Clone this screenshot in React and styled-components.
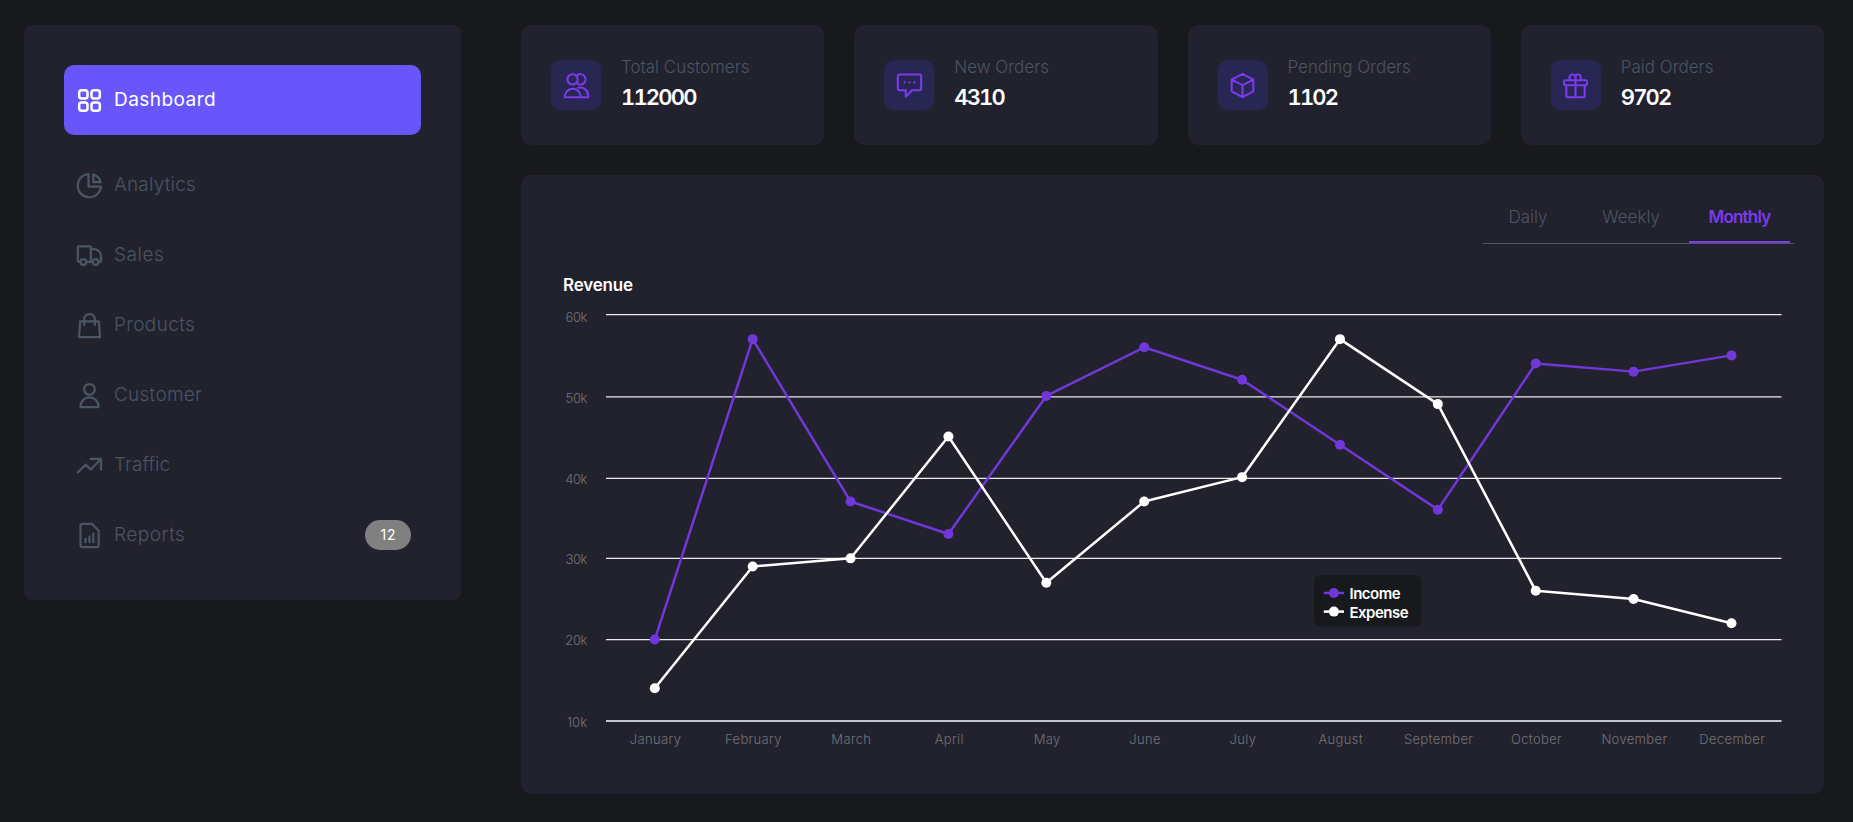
import React from 'react';
import styled, { createGlobalStyle, css } from 'styled-components';

const GlobalStyle = createGlobalStyle`
  *, *::before, *::after { box-sizing: border-box; }
  body {
    margin: 0;
    background: #17191c;
    color: #fff;
    font-family: Inter, 'Liberation Sans', sans-serif;
    font-weight: 300;
  }
`;

const Page = styled.div`
  display: flex;
  align-items: flex-start;
  gap: 60px;
  min-height: 822px;
  padding: 25px 29px 28px 24px;
`;

const Sidebar = styled.nav`
  display: flex;
  flex-direction: column;
  flex: none;
  width: 437px;
  padding: 40px 40px 30px;
  border-radius: 8px;
  background: #22212e;
`;

const NavItem = styled.a`
  display: flex;
  align-items: center;
  height: 70px;
  padding: 0 10px 0 12.5px;
  border-radius: 10px;
  color: #4b5563;
  ${(p) =>
    p.$active &&
    css`
      margin-bottom: 15px;
      background: #6956fb;
      color: #fff;
      font-weight: 400;
    `}
`;

const NavLabel = styled.span`
  margin-left: 12.5px;
  font-size: 19px;
  line-height: 24px;
  letter-spacing: ${(p) => p.$track}px;
`;

const Badge = styled.span`
  margin-left: auto;
  width: 46px;
  height: 30px;
  border-radius: 15px;
  background: #808080;
  color: #fff;
  font-size: 14px;
  font-weight: 400;
  line-height: 29px;
  letter-spacing: 1px;
  text-indent: 1px;
  text-align: center;
`;

const Icon = styled.svg`
  display: block;
  flex: none;
  width: 25px;
  height: 25px;
  overflow: visible;
  fill: none;
  stroke: currentColor;
  stroke-width: ${(p) => p.$weight || 1.25};
  stroke-linecap: round;
  stroke-linejoin: round;
`;

const Main = styled.main`
  display: flex;
  flex: 1;
  flex-direction: column;
  gap: 30px;
  min-width: 0;
`;

const Stats = styled.section`
  display: grid;
  grid-template-columns: repeat(4, 1fr);
  gap: 30px;
`;

const StatCard = styled.article`
  display: flex;
  align-items: center;
  gap: 20px;
  height: 120px;
  padding: 0 30px;
  border-radius: 10px;
  background: #22212e;
`;

const StatIcon = styled.div`
  display: flex;
  align-items: center;
  justify-content: center;
  width: 50px;
  height: 50px;
  border-radius: 10px;
  background: #282653;
  color: #7c3aed;
`;

const StatText = styled.div`
  margin-bottom: 6px;
  line-height: 30px;
`;

const StatLabel = styled.div`
  color: #4b5563;
  font-size: 17px;
`;

const StatValue = styled.div`
  font-size: 22px;
  font-weight: 600;
  font-variant-numeric: tabular-nums;
  letter-spacing: -1.8px;
`;

const ChartCard = styled.section`
  display: flex;
  flex-direction: column;
  padding: 30px;
  border-radius: 10px;
  background: #22212e;
`;

const Tabs = styled.div`
  display: flex;
  align-self: flex-end;
  height: 39px;
  padding-right: 4px;
  border-bottom: 1px solid #4b5563;
`;

const Tab = styled.button`
  width: ${(p) => p.$width}px;
  height: 38px;
  padding: 0 0 14px;
  border: 0;
  background: none;
  color: #4b5563;
  font: 300 17px/24px Inter, 'Liberation Sans', sans-serif;
  ${(p) =>
    p.$active &&
    css`
      padding: 0 0 13px;
      border-bottom: 2px solid #7c3aed;
      color: #7c3aed;
      font-weight: 600;
      letter-spacing: -0.8px;
    `}
`;

const ChartTitle = styled.h2`
  margin: 31px 0 5px 12px;
  font-size: 17px;
  font-weight: 600;
  line-height: 20px;
  letter-spacing: -0.2px;
`;

const Chart = styled.svg`
  display: block;
  width: 1243px;
  height: 464px;
`;

const AxisText = styled.text`
  fill: #737375;
  font-size: 13px;
  letter-spacing: ${(p) => p.$track}px;
`;

const LegendText = styled.text`
  fill: #fff;
  font-size: 15px;
  font-weight: 600;
  letter-spacing: -0.5px;
`;

const icons = {
  grid: (
    <>
      <rect x="1.3" y="1.3" width="5" height="5" rx="1.5" />
      <rect x="8.7" y="1.3" width="5" height="5" rx="1.5" />
      <rect x="1.3" y="8.7" width="5" height="5" rx="1.5" />
      <rect x="8.7" y="8.7" width="5" height="5" rx="1.5" />
    </>
  ),
  pie: (
    <>
      <path d="M6.9.6A7 7 0 1 0 14.4 8.1H6.9z" />
      <path d="M9.8.9v4.6h4.4A6.6 6.6 0 0 0 9.8.9z" />
    </>
  ),
  truck: (
    <>
      <path d="M2 11.2H1.1a.6.6 0 0 1-.6-.6V2.6a.6.6 0 0 1 .6-.6h6.6a.6.6 0 0 1 .6.6v8.6M5.5 11.3h3.8M8.3 3.7h1.8a4.3 4.3 0 0 1 4.3 4.3v2.7a.6.6 0 0 1-.6.6H13" />
      <circle cx="3.8" cy="11.4" r="1.7" />
      <circle cx="11.2" cy="11.4" r="1.7" />
    </>
  ),
  bag: (
    <path d="M1.9 5h11.2l.7 9.5H1.2zM4.3 7.2V3.8a3.2 3.2 0 0 1 6.4 0v3.4" />
  ),
  user: (
    <>
      <circle cx="7.5" cy="3.8" r="3.2" />
      <path d="M2.1 14.4v-.4a5.4 5.4 0 0 1 10.8 0v.4z" />
    </>
  ),
  trend: <path d="M.5 11.6 5.2 6.9l3 3 6-6M8 3.5h6.4v6.4" />,
  report: (
    <path d="M3.2.5h5.7l4.1 4.2v9a.8.8 0 0 1-.8.8H2.9a.8.8 0 0 1-.8-.8v-12A1.1 1.1 0 0 1 3.2.5zM5.1 9.5v2M7.5 8v3.5M9.8 6.4v5.1" />
  ),
  users: (
    <>
      <circle cx="5.1" cy="3.8" r="3.1" />
      <path d="M.5 14.5v-.9a4.8 4.8 0 0 1 9.5 0v.9zM8 1.3a3.1 3.1 0 1 1 0 5M8.4 8.9a4.8 4.8 0 0 1 6.1 4.7v.9H10" />
    </>
  ),
  chat: (
    <>
      <path d="M1.5.9h12a1 1 0 0 1 1 1v7.4a1 1 0 0 1-1 1H9l-3.7 3.9v-3.9H1.5a1 1 0 0 1-1-1V1.9a1 1 0 0 1 1-1z" />
      <path d="M4.6 5.6h.01M7.5 5.6h.01M10.4 5.6h.01" strokeWidth="1.4" />
    </>
  ),
  cube: (
    <path d="M7.5.5 14 4v7L7.5 14.5 1 11V4zM1 4l6.5 3.3L14 4M7.5 7.3v7.2" />
  ),
  gift: (
    <>
      <rect x=".6" y="4.3" width="13.8" height="3" rx=".8" />
      <path d="M2 7.3v6.3a.9.9 0 0 0 .9.9h9.2a.9.9 0 0 0 .9-.9V7.3M7.5 4.3v10.2M7.5 4.3V2.4A1.85 1.85 0 1 0 4.1 3.7l.2.5M7.5 4.3V2.9a1.6 1.6 0 1 1 3.1 0v1.3" />
    </>
  ),
};

const Glyph = ({ name, weight }) => (
  <Icon viewBox="0 0 15 15" $weight={weight} aria-hidden="true">
    {icons[name]}
  </Icon>
);

const navItems = [
  { label: 'Dashboard', icon: 'grid', track: 0.45, active: true },
  { label: 'Analytics', icon: 'pie', track: 0.19 },
  { label: 'Sales', icon: 'truck', track: 0.5 },
  { label: 'Products', icon: 'bag', track: 0.38 },
  { label: 'Customer', icon: 'user', track: 0.26 },
  { label: 'Traffic', icon: 'trend', track: 0.05 },
  { label: 'Reports', icon: 'report', track: 0.5, badge: '12' },
];

const stats = [
  { label: 'Total Customers', value: '112000', icon: 'users' },
  { label: 'New Orders', value: '4310', icon: 'chat' },
  { label: 'Pending Orders', value: '1102', icon: 'cube' },
  { label: 'Paid Orders', value: '9702', icon: 'gift' },
];

const tabs = [
  { label: 'Daily', width: 90 },
  { label: 'Weekly', width: 116 },
  { label: 'Monthly', width: 101, active: true },
];

const gridLines = [
  { label: '60k', y: 314.65, text: 322 },
  { label: '50k', y: 396.95, text: 403 },
  { label: '40k', y: 478.35, text: 484 },
  { label: '30k', y: 558.35, text: 564 },
  { label: '20k', y: 639.65, text: 645 },
  { label: '10k', y: 721, text: 727, base: true },
];

const months = [
  'January', 'February', 'March', 'April', 'May', 'June',
  'July', 'August', 'September', 'October', 'November', 'December',
];

const series = [
  { name: 'Income', color: '#7038d8', values: [20, 57, 37, 33, 50, 56, 52, 44, 36, 54, 53, 55] },
  { name: 'Expense', color: '#fff', values: [14, 29, 30, 45, 27, 37, 40, 57, 49, 26, 25, 22] },
];

const xAt = (i) => 654.8 + i * 97.88;
const yAt = (v) => 720.7 - (v - 10) * 8.118;

function RevenueChart() {
  return (
    <Chart viewBox="551 300 1243 464">
      {gridLines.map((g) => (
        <g key={g.label}>
          <line
            x1="606"
            x2="1781.5"
            y1={g.y}
            y2={g.y}
            stroke={g.base ? '#c3c8d6' : '#ededed'}
            strokeWidth={g.base ? 2 : 1.3}
          />
          <AxisText x="587" y={g.text} textAnchor="end" $track={g.base ? 0 : -0.4}>
            {g.label}
          </AxisText>
        </g>
      ))}
      {months.map((m, i) => (
        <AxisText key={m} x={xAt(i) + 0.8} y="744" textAnchor="middle" $track={0.35}>
          {m}
        </AxisText>
      ))}
      {series.map((s) => (
        <g key={s.name} fill={s.color}>
          <polyline
            points={s.values.map((v, i) => `${xAt(i)},${yAt(v)}`).join(' ')}
            fill="none"
            stroke={s.color}
            strokeWidth="2.5"
            strokeLinejoin="bevel"
          />
          {s.values.map((v, i) => (
            <circle key={i} cx={xAt(i)} cy={yAt(v)} r="5" />
          ))}
        </g>
      ))}
      <rect x="1314" y="575" width="107.3" height="51.3" rx="6" fill="#17191c" />
      {series.map((s, i) => (
        <g key={s.name}>
          <line
            x1="1323.8"
            x2="1344"
            y1={593 + i * 18.6}
            y2={593 + i * 18.6}
            stroke={s.color}
            strokeWidth="2.5"
          />
          <circle cx="1333.9" cy={593 + i * 18.6} r="5" fill={s.color} />
          <LegendText x="1349.5" y={598.7 + i * 19}>
            {s.name}
          </LegendText>
        </g>
      ))}
    </Chart>
  );
}

export default function App() {
  return (
    <>
      <GlobalStyle />
      <Page>
        <Sidebar>
          {navItems.map((item) => (
            <NavItem key={item.label} $active={item.active}>
              <Glyph name={item.icon} weight={item.active ? 1.5 : 1.35} />
              <NavLabel $track={item.track}>{item.label}</NavLabel>
              {item.badge && <Badge>{item.badge}</Badge>}
            </NavItem>
          ))}
        </Sidebar>
        <Main>
          <Stats>
            {stats.map((s) => (
              <StatCard key={s.label}>
                <StatIcon>
                  <Glyph name={s.icon} />
                </StatIcon>
                <StatText>
                  <StatLabel>{s.label}</StatLabel>
                  <StatValue>{s.value}</StatValue>
                </StatText>
              </StatCard>
            ))}
          </Stats>
          <ChartCard>
            <Tabs>
              {tabs.map((t) => (
                <Tab key={t.label} $width={t.width} $active={t.active}>
                  {t.label}
                </Tab>
              ))}
            </Tabs>
            <ChartTitle>Revenue</ChartTitle>
            <RevenueChart />
          </ChartCard>
        </Main>
      </Page>
    </>
  );
}
